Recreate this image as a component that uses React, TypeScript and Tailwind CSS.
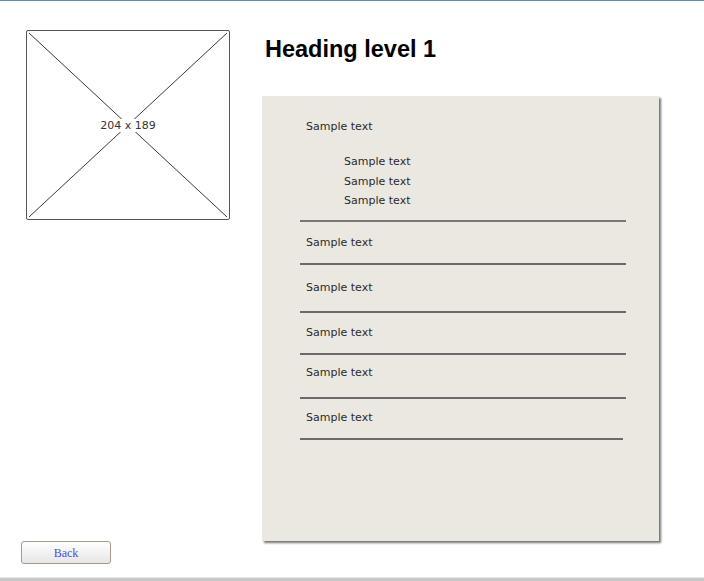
import React from "react";

const hand = { fontFamily: '"DejaVu Sans", sans-serif' };

// each row: text, then the rule below it
const rows = [
  { text: "Sample text", mt: "mt-[13px]", lineMt: "mt-[12px]", w: "w-[326px]" },
  { text: "Sample text", mt: "mt-[15px]", lineMt: "mt-[15px]", w: "w-[326px]" },
  { text: "Sample text", mt: "mt-[12px]", lineMt: "mt-[12px]", w: "w-[326px]" },
  { text: "Sample text", mt: "mt-[10px]", lineMt: "mt-[16px]", w: "w-[326px]" },
  { text: "Sample text", mt: "mt-[11px]", lineMt: "mt-[12px]", w: "w-[323px]" },
];

function Placeholder() {
  return (
    <div className="relative w-[204px] h-[190px] border-[1.5px] border-[#555] rounded-[2px] bg-white">
      <svg className="absolute inset-0" width="100%" height="100%" viewBox="0 0 204 190" preserveAspectRatio="none">
        <line x1="2" y1="2" x2="202" y2="188" stroke="#222" strokeWidth="0.9" />
        <line x1="202" y1="2" x2="2" y2="188" stroke="#222" strokeWidth="0.9" />
      </svg>
      <div className="absolute inset-0 flex items-center justify-center">
        <span className="bg-white px-[1px] text-[11px] leading-[13px] text-[#333]" style={hand}>
          204 x 189
        </span>
      </div>
    </div>
  );
}

export default function App() {
  return (
    <div className="w-[704px] h-[581px] bg-white flex flex-col overflow-hidden">
      <div className="h-px bg-[#5b8dbb]" />
      <div className="flex flex-1">
        {/* left column */}
        <div className="w-[262px] pl-[21px] flex flex-col">
          <div className="ml-[5px] mt-[29px]">
            <Placeholder />
          </div>
          <button
            className="mt-auto mb-[13px] w-[90px] h-[23px] rounded-[3px] border border-[#a89a8a] bg-gradient-to-b from-white to-[#e6e6e6] text-[12px] text-[#4b4bff]"
            style={{ fontFamily: '"Liberation Serif", serif' }}
          >
            Back
          </button>
        </div>

        {/* right column */}
        <div className="flex flex-col">
          <h1
            className="mt-[36px] pl-[3px] text-[23.5px] leading-[24px] font-bold text-black"
            style={{ fontFamily: '"Liberation Sans", Arial, sans-serif' }}
          >
            Heading level 1
          </h1>
          <div
            className="mt-[35px] w-[397px] h-[445px] bg-[#ebe8e2] shadow-[2px_2px_2px_rgba(0,0,0,0.55)] text-[11px] text-[#2a2a2a]"
            style={hand}
          >
            <div className="pl-[44px] pt-[23px] leading-[16px]">Sample text</div>
            <div className="pl-[82px] mt-[17px] leading-[19.5px]">
              <div>Sample text</div>
              <div>Sample text</div>
              <div>Sample text</div>
            </div>
            <div className="ml-[38px] mt-[9px] w-[326px] h-[2px] bg-[#777]" />
            {rows.map((r, i) => (
              <div key={i}>
                <div className={`pl-[44px] leading-[16px] ${r.mt}`}>{r.text}</div>
                <div className={`ml-[38px] h-[2px] bg-[#6a6a6a] ${r.lineMt} ${r.w}`} />
              </div>
            ))}
          </div>
        </div>
      </div>
      <div className="h-px bg-[#e6e6e6]" />
      <div className="h-[3px] bg-[#c8c8c8]" />
    </div>
  );
}
